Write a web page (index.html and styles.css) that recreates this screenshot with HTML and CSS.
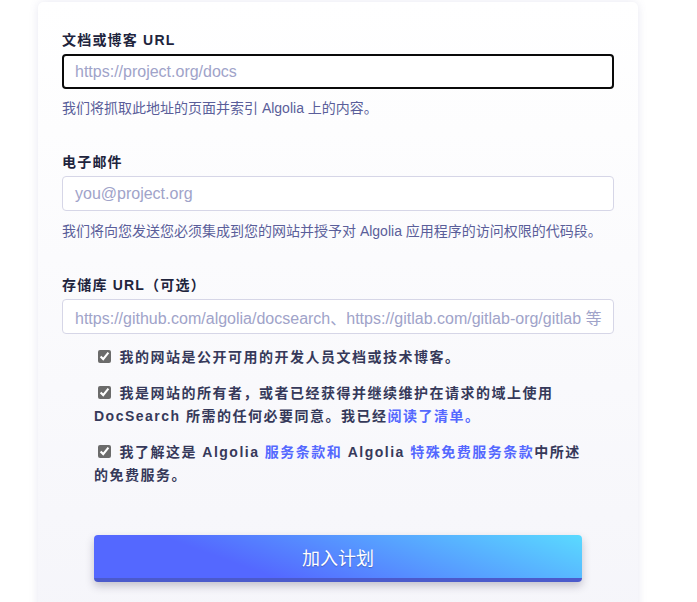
FILE: index.html
```html
<!DOCTYPE html>
<html lang="zh-CN">
<head>
<meta charset="utf-8">
<link rel="stylesheet" href="styles.css">
</head>
<body>
<div class="page">
  <form class="card">
    <label class="label">文档或博客 URL</label>
    <div class="input focused"><span class="ph">https://project.org/docs</span></div>
    <p class="help">我们将抓取此地址的页面并索引 Algolia 上的内容。</p>

    <label class="label">电子邮件</label>
    <div class="input"><span class="ph">you@project.org</span></div>
    <p class="help help-second">我们将向您发送您必须集成到您的网站并授予对 Algolia 应用程序的访问权限的代码段。</p>

    <label class="label">存储库 URL（可选）</label>
    <div class="input"><span class="ph">https://github.com/algolia/docsearch、https://gitlab.com/gitlab-org/gitlab 等</span></div>

    <div class="checks">
      <p class="check"><input type="checkbox" checked> 我的网站是公开可用的开发人员文档或技术博客。</p>
      <p class="check"><input type="checkbox" checked> 我是网站的所有者，或者已经获得并继续维护在请求的域上使用 DocSearch 所需的任何必要同意。我已经<a href="#">阅读了清单。</a></p>
      <p class="check"><input type="checkbox" checked> 我了解这是 Algolia <a href="#">服务条款和</a> Algolia <a href="#">特殊免费服务条款</a>中所述的免费服务。</p>
    </div>

    <div class="actions">
      <button type="button" class="btn">加入计划</button>
    </div>
  </form>
</div>
</body>
</html>
```
FILE: styles.css
```css
html, body {
  margin: 0;
  padding: 0;
  background: #ffffff;
}
body {
  font-family: "Liberation Sans", "Noto Sans CJK SC", sans-serif;
  color: #21243d;
  overflow: hidden;
  height: 602px;
}
.page {
  padding: 2px 0 0 38px;
}
.card {
  width: 600px;
  box-sizing: border-box;
  padding: 28px 24px 40px;
  border-radius: 6px;
  background: linear-gradient(to bottom, #ffffff 0%, #f5f5fa 100%);
  box-shadow: 0 0 10px rgba(90, 94, 154, 0.14);
  display: flex;
  flex-direction: column;
  min-height: 640px;
}
.label {
  display: block;
  font-size: 14px;
  font-weight: 700;
  letter-spacing: 1.2px;
  line-height: 20px;
  height: 20px;
  color: #21243d;
  margin-bottom: 4px;
}
.input {
  height: 35px;
  box-sizing: border-box;
  border: 1px solid #d6d6e7;
  border-radius: 4px;
  background: #ffffff;
  display: flex;
  align-items: center;
  padding: 0 12px;
  white-space: nowrap;
  overflow: hidden;
  flex: none;
}
.input.focused {
  border: 2px solid #0a0a0a;
  padding: 0 11px;
}
.ph {
  font-size: 16px;
  color: #a0a3c9;
}
.help {
  margin: 10px 0 35px;
  font-size: 14px;
  line-height: 18px;
  height: 18px;
  color: #5a5e9a;
}
.help-second {
  margin-top: 11px;
}
.checks {
  padding: 12px 32px 0;
  display: flex;
  flex-direction: column;
  gap: 13px;
}
.check {
  margin: 0;
  font-size: 14px;
  font-weight: 700;
  letter-spacing: 1.5px;
  line-height: 23px;
  color: #36395a;
}
.check input {
  accent-color: #6b6b6b;
  vertical-align: -1px;
}
.check a {
  color: #5468ff;
  text-decoration: none;
}
.actions {
  padding: 48px 32px 0;
}
.btn {
  width: 100%;
  height: 47px;
  border: 0;
  border-bottom: 4px solid #4b5acb;
  border-radius: 4px;
  background: linear-gradient(20deg, #5468ff 0%, #5468ff 30%, #5adaff 100%);
  color: #ffffff;
  font-family: "Noto Sans CJK SC", sans-serif;
  font-size: 18px;
  text-shadow: 0 1px 1px rgba(30, 35, 90, 0.35);
  box-shadow: 0 4px 8px rgba(45, 35, 66, 0.25);
  cursor: pointer;
}
```
